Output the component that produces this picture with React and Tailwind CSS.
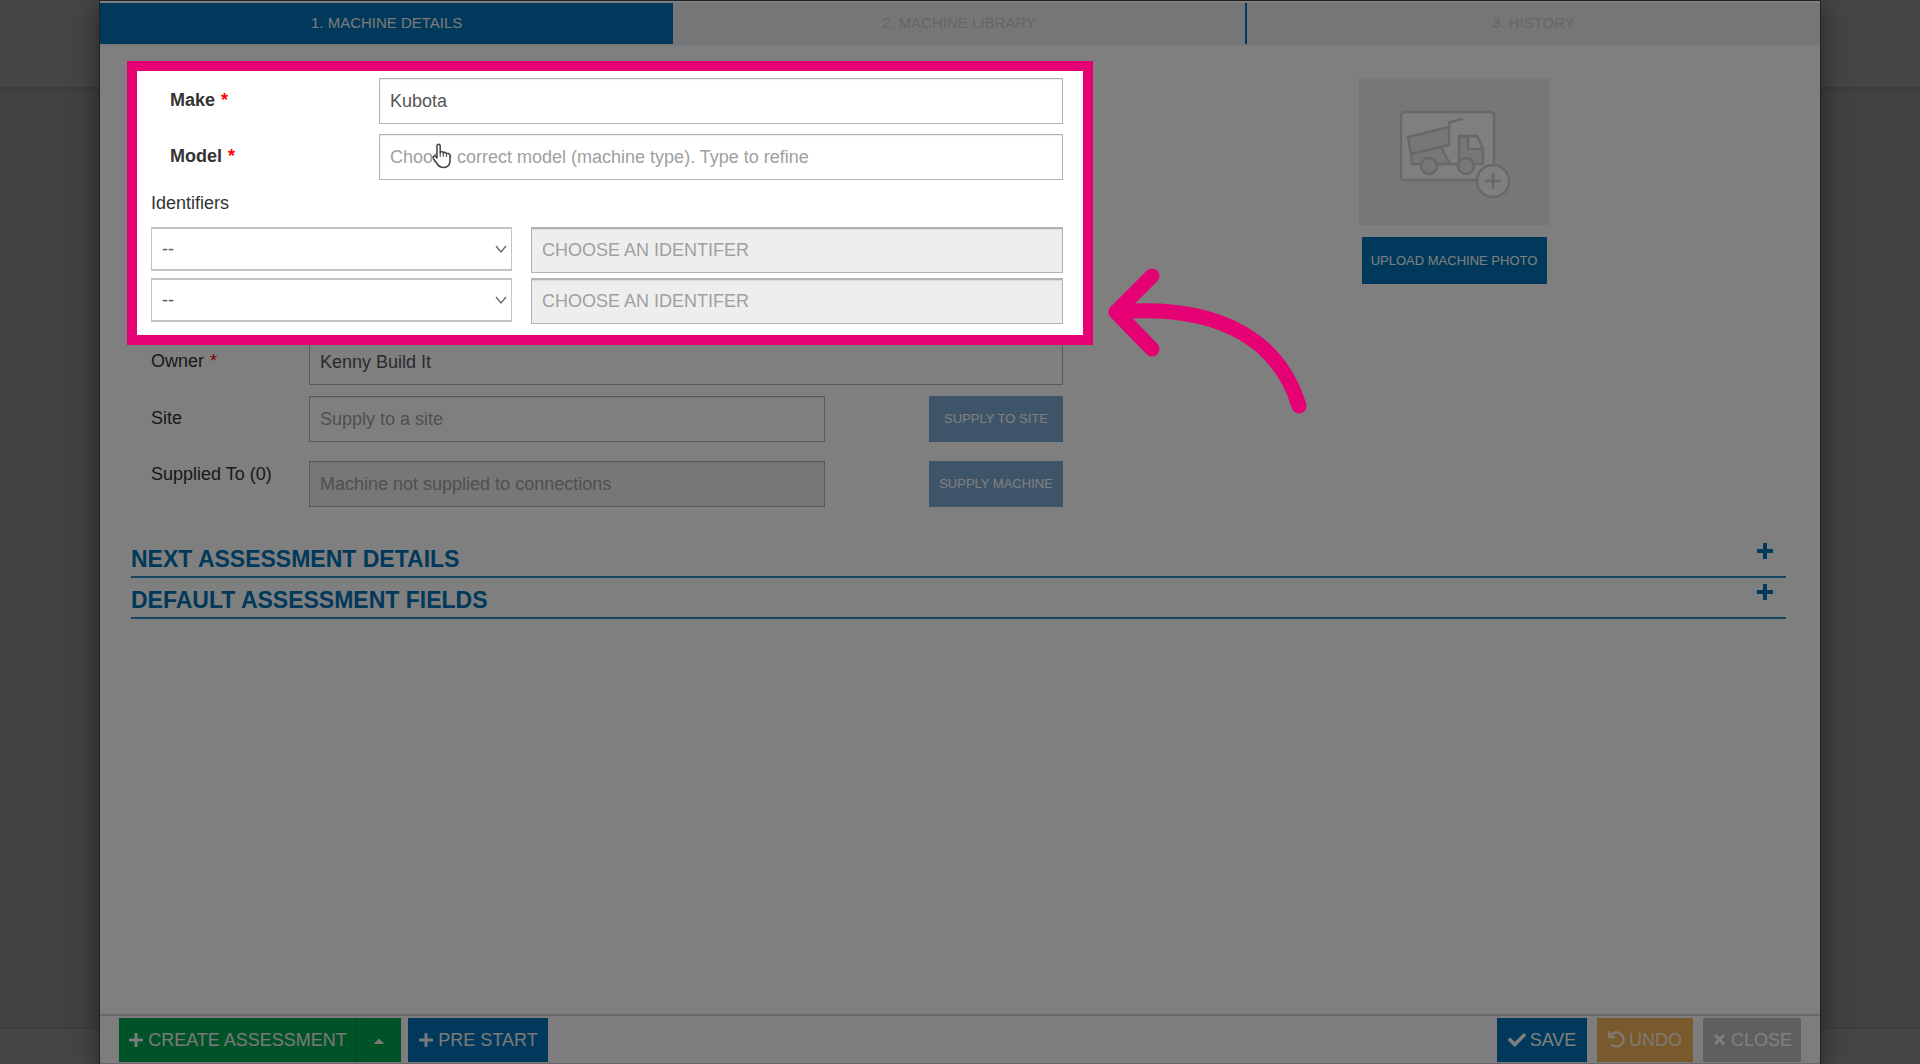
import { useState } from 'react';
import { FaPlus, FaCheck, FaUndo, FaTimes, FaCaretUp } from 'react-icons/fa';

const field =
  'h-[46px] w-full min-w-0 border border-[#b3b3b3] px-[10px] text-lg text-[#555555] placeholder:text-[#a0a0a0] shadow-[inset_0_1px_1px_rgba(0,0,0,0.08)] focus:outline-none';
const label = 'pt-[10px] text-lg leading-6 text-[#333333]';

function Required() {
  return <span className="ml-px text-[#ff0000]">*</span>;
}

function Tabs() {
  const base = 'h-[41px] pb-[2px] text-[15px] leading-5';
  return (
    <nav className="grid grid-cols-3 border-b-2 border-[#f0f0f0] bg-[#ebecf1]">
      <button type="button" className={`${base} bg-[#0073b6] text-[#f4f4f4]`}>1. MACHINE DETAILS</button>
      <button type="button" className={`${base} border-r-2 border-[#0073b6] text-[#cccccc]`}>2. MACHINE LIBRARY</button>
      <button type="button" className={`${base} text-[#cccccc]`}>3. HISTORY</button>
    </nav>
  );
}

function IdentifierRow({ id }) {
  return (
    <div className="flex items-start gap-[19px]">
      <div className="relative w-[361px] shrink-0">
        <select
          aria-label={`Identifier type ${id}`}
          className="h-11 w-full appearance-none border border-t-2 border-b-2 border-[#c4c4c4] bg-white px-[10px] text-lg text-[#555555]"
        >
          <option>--</option>
        </select>
        <svg className="pointer-events-none absolute top-[17px] right-[5px]" width="12" height="10" viewBox="0 0 12 10" fill="none" stroke="#666666" strokeWidth="1.3">
          <path d="M1 2l5 6 5-6" />
        </svg>
      </div>
      <input
        aria-label={`Identifier value ${id}`}
        disabled
        placeholder="CHOOSE AN IDENTIFER"
        className={`${field} border-t-2 bg-[#eeeeee]`}
      />
    </div>
  );
}

// Spotlight frame: everything outside of it is dimmed by the spread shadow
function Highlight() {
  return (
    <div className="pointer-events-none absolute -top-[17px] -right-[30px] -bottom-[21px] -left-[24px] z-40 border-[10px] border-[#e50074] shadow-[0_0_0_3000px_rgba(0,0,0,0.5)]">
      <svg className="absolute top-[191px] left-full ml-5" width="220" height="160" viewBox="0 0 220 160" fill="none" stroke="#e50074" strokeWidth="15" strokeLinecap="round" strokeLinejoin="round">
        <path d="M196 144C178 84 124 41 13 50" />
        <path d="M49 14L13 50l36 37" />
      </svg>
    </div>
  );
}

function HandCursor() {
  return (
    <svg className="pointer-events-none absolute top-[9px] left-[53px]" width="20" height="26" viewBox="0 0 20 26" fill="#ffffff" stroke="#444444" strokeWidth="1.5" strokeLinejoin="round">
      <path d="M5 15V3.200C5 .6 8.200.6 8.200 3.200V10C8.300 8 11 8.100 11.300 10.200C11.800 8.700 14.200 9 14.400 11C15.200 10 17.800 10.300 18 12.500V17C18 21 16 24.500 11.500 24.500C7.500 24.500 6 22.500 4.500 20L1.300 15.300C.5 13.600 2.600 12.300 3.800 13.600Z" />
      <path d="M8.200 10v4M11.300 10.500V14M14.400 11.500V14" strokeWidth="1" />
    </svg>
  );
}

function MachineForm() {
  const [make, setMake] = useState('Kubota');
  const [owner, setOwner] = useState('Kenny Build It');

  return (
    <form className="pr-[61px] pl-5">
      <section className="relative">
        <div className="flex">
          <label htmlFor="make" className={`${label} w-[228px] shrink-0 pl-[19px] font-bold`}>Make <Required /></label>
          <input id="make" value={make} onChange={(e) => setMake(e.target.value)} className={field} />
        </div>
        <div className="mt-[10px] flex">
          <label htmlFor="model" className={`${label} w-[228px] shrink-0 pl-[19px] font-bold`}>Model <Required /></label>
          <div className="relative flex-1">
            <input id="model" placeholder="Choose correct model (machine type). Type to refine" className={field} />
            <HandCursor />
          </div>
        </div>
        <h2 className="h-[47px] pt-[11px] text-lg leading-6 text-[#333333]">Identifiers</h2>
        <div className="flex flex-col gap-[5px]">
          <IdentifierRow id={1} />
          <IdentifierRow id={2} />
        </div>
        <Highlight />
      </section>

      <div className="mt-[15px] flex">
        <label htmlFor="owner" className={`${label} w-[158px] shrink-0`}>Owner <Required /></label>
        <input id="owner" value={owner} onChange={(e) => setOwner(e.target.value)} className={field} />
      </div>
      <div className="mt-[11px] flex">
        <label htmlFor="site" className={`${label} w-[158px] shrink-0`}>Site</label>
        <input id="site" placeholder="Supply to a site" className={field} />
        <button type="button" className="ml-[104px] h-[46px] w-[134px] shrink-0 bg-[#7caad2] text-[13px] text-white">SUPPLY TO SITE</button>
      </div>
      <div className="mt-[10px] flex">
        <label htmlFor="supplied" className={`${label} w-[158px] shrink-0`}>Supplied To (0)</label>
        <input id="supplied" disabled placeholder="Machine not supplied to connections" className={`${field} mt-[9px] bg-[#eeeeee]`} />
        <button type="button" className="mt-[9px] ml-[104px] h-[46px] w-[134px] shrink-0 bg-[#7caad2] text-[13px] text-white">SUPPLY MACHINE</button>
      </div>
    </form>
  );
}

function PhotoUpload() {
  return (
    <div className="flex flex-col items-center gap-3 pr-[2px]">
      <div className="flex h-[147px] w-[191px] items-center justify-center bg-[#eeeeee]">
        <svg className="overflow-visible" width="110" height="84" viewBox="0 0 110 84" fill="none" stroke="#d0d0d0" strokeWidth="2.500" strokeLinejoin="round" strokeLinecap="round">
          <rect x="2" y="2" width="93" height="68" rx="3" fill="#ffffff" />
          <path d="M9 27L50 17V35L12 44Z" fill="#eeeeee" />
          <path d="M50 17V12.500L63 9" />
          <path d="M12 44L42 37L51 54H13Z" fill="#eeeeee" />
          <path d="M51 54H60V26H78L84 39V54H60" fill="#eeeeee" />
          <path d="M69 26V39H84L78 26Z" fill="#ffffff" />
          <circle cx="30" cy="56" r="8" fill="#eeeeee" />
          <circle cx="67" cy="56" r="8" fill="#eeeeee" />
          <circle cx="94" cy="71" r="16" fill="#ffffff" />
          <path d="M94 64V78M87 71H101" />
        </svg>
      </div>
      <button type="button" className="h-[47px] w-[185px] bg-[#0073b6] text-[13px] text-white">UPLOAD MACHINE PHOTO</button>
    </div>
  );
}

function Accordion({ title }) {
  return (
    <button type="button" className="flex h-[41px] w-full justify-between border-b-2 border-[#2f8cc4] pr-[13px] text-left text-[23px] leading-[44px] font-bold text-[#0073b6]">
      <span>{title}</span>
      <svg className="mt-[6px]" width="16" height="16" viewBox="0 0 16 16" stroke="currentColor" strokeWidth="4">
        <path d="M8 0V16M0 8H16" />
      </svg>
    </button>
  );
}

function Footer() {
  const btn = 'flex h-11 items-center justify-center gap-1 pb-px text-lg';
  return (
    <footer className="flex items-start justify-between border-t-2 border-b border-[#d0d0d0] bg-[#fbfbfb] px-[19px] pt-[2px] pb-px">
      <div className="flex">
        <button type="button" className={`${btn} w-[237px] bg-[#00a44f] text-[#f4f4f4]`}>
          <FaPlus size={16} /> CREATE ASSESSMENT
        </button>
        <button type="button" aria-label="More assessment options" className={`${btn} w-[45px] border-l border-[#008a42] bg-[#00a44f] pt-[3px] text-[#f4f4f4]`}>
          <FaCaretUp size={16} />
        </button>
        <button type="button" className={`${btn} ml-[7px] w-[140px] bg-[#0073b6] text-[#f4f4f4]`}>
          <FaPlus size={16} /> PRE START
        </button>
      </div>
      <div className="flex gap-[10px]">
        <button type="button" className={`${btn} w-[90px] bg-[#0073b6] text-white`}>
          <FaCheck size={18} /> SAVE
        </button>
        <button type="button" className={`${btn} w-[96px] bg-[#f2b45a] text-[#fff3e0]`}>
          <FaUndo size={17} /> UNDO
        </button>
        <button type="button" className={`${btn} w-[98px] bg-[#bebebe] text-white`}>
          <FaTimes size={15} /> CLOSE
        </button>
      </div>
    </footer>
  );
}

export default function App() {
  return (
    <div className="flex h-screen flex-col overflow-hidden bg-[#848484] font-['Liberation_Sans',Arial,sans-serif]">
      <div className="absolute inset-0 flex flex-col justify-between">
        <div className="h-[88px] border-b border-[#7a7a7a] bg-[#8a8a8a] shadow-[0_2px_6px_rgba(0,0,0,0.1)]" />
        <div className="h-9 border-t border-[#747474] bg-[#8a8a8a]" />
      </div>
      <main className="relative mx-[99px] flex flex-1 flex-col border-x border-t border-[#444444] bg-white pt-[2px] shadow-[0_6px_24px_rgba(0,0,0,0.5)]">
        <Tabs />
        <div className="flex-1 pt-[32px] pr-[34px] pl-[31px]">
          <div className="grid grid-cols-[3fr_2fr]">
            <MachineForm />
            <PhotoUpload />
          </div>
          <div className="mt-[30px]">
            <Accordion title="NEXT ASSESSMENT DETAILS" />
            <Accordion title="DEFAULT ASSESSMENT FIELDS" />
          </div>
        </div>
        <Footer />
      </main>
    </div>
  );
}
